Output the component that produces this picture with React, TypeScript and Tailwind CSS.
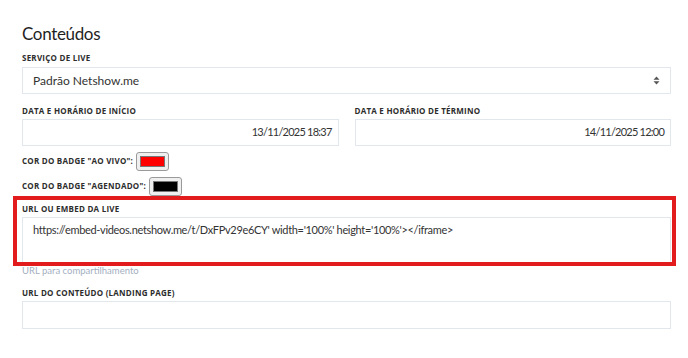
import React from 'react';

const labelCls =
  "block text-[8px] font-bold uppercase tracking-[0.03em] text-[#2d2d2d] [font-family:'Open_Sans',sans-serif]";
const boxCls =
  'w-full border border-[#e2e7ee] bg-white text-[11px] text-[#333] [font-family:Lato,sans-serif]';

function Swatch({ color }: { color: string }) {
  return (
    <span className="ml-[3px] inline-flex h-[19px] w-[33px] items-center justify-center rounded-[3px] border border-[#9a9a9a] bg-[#efefef] p-[3px]">
      <span className="block h-full w-full border border-[#777]" style={{ background: color }} />
    </span>
  );
}

export default function App() {
  return (
    <div className="relative h-[358px] w-[688px] overflow-hidden bg-white pl-[22px] pr-[17px]">
      <h1 className="pt-[22px] text-[17px] leading-[24px] tracking-[-0.02em] text-[#1f1f1f] [font-family:Lato,sans-serif]">
        Conteúdos
      </h1>

      <label className={`${labelCls} mt-[6px] leading-[12px]`}>Serviço de live</label>
      <div className={`${boxCls} mt-[3px] flex h-[27px] items-center justify-between pl-[10px] pr-[10px] text-[12px]`}>
        <span>Padrão Netshow.me</span>
        <svg width="7" height="9" viewBox="0 0 7 9" className="text-[#555]">
          <path d="M3.5 0.5 L6.5 3.8 H0.5 Z" fill="currentColor" />
          <path d="M3.5 8.5 L6.5 5.2 H0.5 Z" fill="currentColor" />
        </svg>
      </div>

      <div className="mt-[11px] grid grid-cols-2 gap-x-[16px]">
        <div>
          <label className={`${labelCls} leading-[12px]`}>Data e horário de início</label>
          <div className={`${boxCls} mt-[2px] flex h-[27px] items-center justify-end pr-[6px] text-[10.5px] tracking-[-0.07em]`}>
            13/11/2025 18:37
          </div>
        </div>
        <div>
          <label className={`${labelCls} leading-[12px]`}>Data e horário de término</label>
          <div className={`${boxCls} mt-[2px] flex h-[27px] items-center justify-end pr-[6px] text-[10.5px] tracking-[-0.07em]`}>
            14/11/2025 12:00
          </div>
        </div>
      </div>

      <div className="mt-[5px] flex h-[20px] items-center">
        <span className={labelCls}>Cor do badge "ao vivo":</span>
        <Swatch color="#ff0000" />
      </div>
      <div className="mt-[5px] flex h-[20px] items-center">
        <span className={labelCls}>Cor do badge "agendado":</span>
        <Swatch color="#000000" />
      </div>

      <label className={`${labelCls} mt-[7px] leading-[12px]`}>URL ou embed da live</label>
      <div className={`${boxCls} mt-[2px] h-[48px] px-[10px] pt-[4px] leading-[16px] tracking-[-0.03em]`}>
        https://embed-videos.netshow.me/t/DxFPv29e6CY' width='100%' height='100%'&gt;&lt;/iframe&gt;
      </div>
      <p className="text-[9.5px] leading-[12px] text-[#a3afbf] [font-family:Lato,sans-serif]">
        URL para compartilhamento
      </p>

      <label className={`${labelCls} mt-[10px] leading-[12px]`}>URL do conteúdo (landing page)</label>
      <div className={`${boxCls} mt-[2px] h-[28px]`} />

      <div className="pointer-events-none absolute left-[13px] top-[196px] h-[70px] w-[663px] border-[4px] border-[#e21c1c]" />
    </div>
  );
}
